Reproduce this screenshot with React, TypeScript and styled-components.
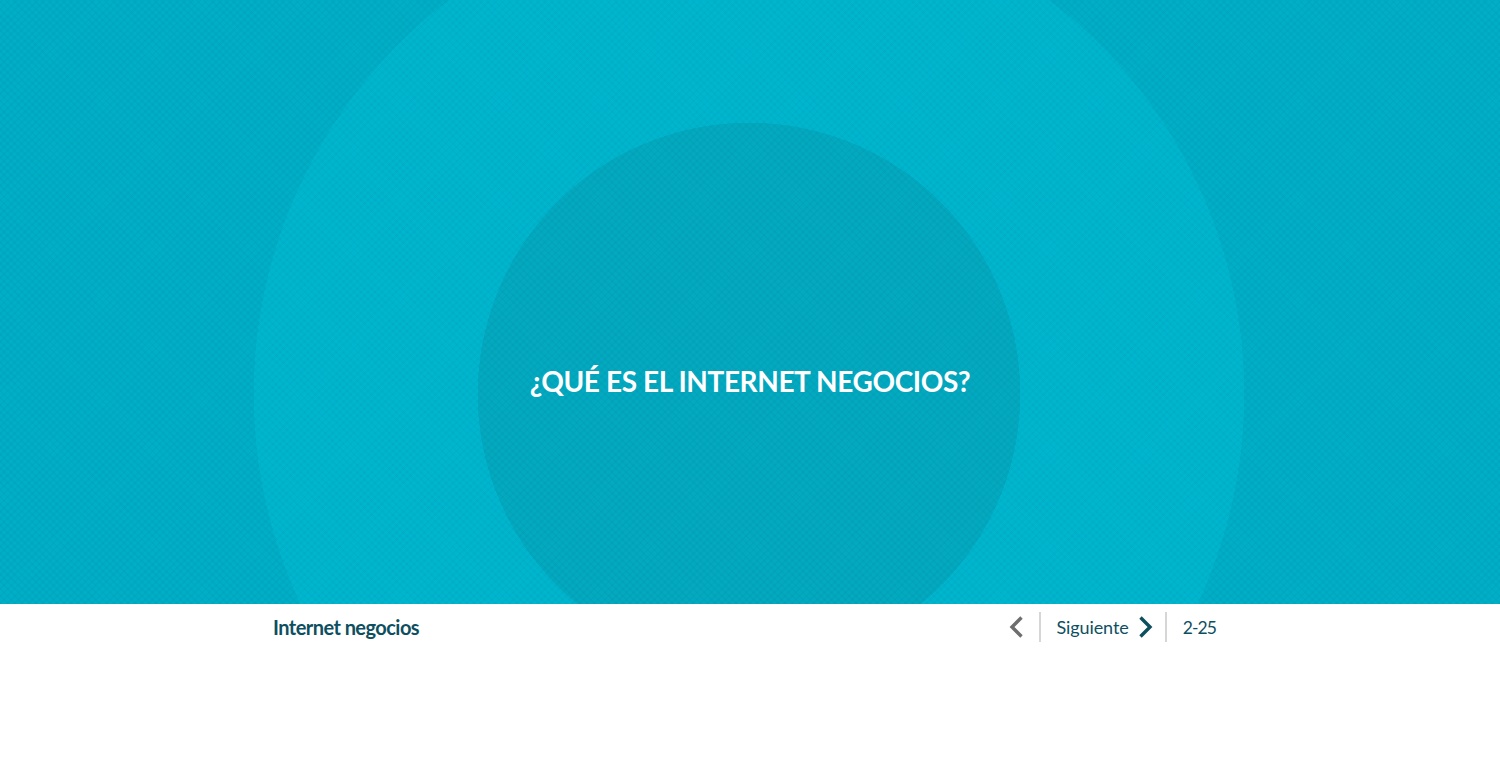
import React from "react";
import styled, { createGlobalStyle } from "styled-components";

const Global = createGlobalStyle`
  html, body { margin: 0; padding: 0; background: #ffffff; }
  body { font-family: "Lato", "Open Sans", sans-serif; }
`;

const Page = styled.div`
  width: 1500px;
  height: 768px;
  display: flex;
  flex-direction: column;
  background: #ffffff;
`;

const Banner = styled.section`
  height: 604px;
  flex: none;
  display: flex;
  justify-content: center;
  align-items: flex-start;
  padding-top: 359px;
  box-sizing: border-box;
  background-color: #00aec6;
  background-image:
    repeating-linear-gradient(45deg, rgba(0, 60, 80, 0.035) 0 2px, rgba(255,255,255,0) 2px 5px),
    repeating-linear-gradient(-45deg, rgba(0, 60, 80, 0.035) 0 2px, rgba(255,255,255,0) 2px 5px),
    radial-gradient(circle at 749px 394px, #02a9bf 0 271px, #00b6ce 271.5px 495px, #00aec6 495.5px);
`;

const Title = styled.h1`
  margin: 0;
  color: #ffffff;
  font-family: "Lato", sans-serif;
  font-weight: 700;
  font-size: 28px;
  letter-spacing: -0.4px;
  line-height: 44px;
`;

const Footer = styled.footer`
  flex: 1;
  background: #ffffff;
`;

const FooterRow = styled.div`
  width: 954px;
  margin: 0 auto;
  height: 46px;
  display: flex;
  align-items: center;
  justify-content: space-between;
`;

const CourseName = styled.span`
  color: #0e4f5f;
  font-family: "Lato", sans-serif;
  font-weight: 700;
  font-size: 20px;
  letter-spacing: -0.55px;
`;

const Nav = styled.nav`
  display: flex;
  align-items: center;
  height: 30px;
  padding-right: 11px;
`;

const NavButton = styled.button`
  border: none;
  background: none;
  padding: 0;
  display: flex;
  align-items: center;
  gap: 9px;
  cursor: pointer;
  font-family: "Lato", sans-serif;
  font-size: 18px;
  letter-spacing: -0.1px;
  color: #0e4f5f;
`;

const Divider = styled.span<{ $before: number; $after: number }>`
  width: 2px;
  height: 30px;
  background: #d6d6d6;
  margin: 0 ${(p) => p.$after}px 0 ${(p) => p.$before}px;
`;

const PageCount = styled.span`
  font-family: "Lato", sans-serif;
  font-size: 17.5px;
  letter-spacing: -0.9px;
  color: #0e4f5f;
`;

const Chevron = ({ dir, color }: { dir: "left" | "right"; color: string }) => (
  <svg width="15" height="24" viewBox="0 0 15 24" style={{ display: "block" }}>
    <path
      d={dir === "left" ? "M12.5 2.5 L3 12 L12.5 21.5" : "M2.5 2.5 L12 12 L2.5 21.5"}
      fill="none"
      stroke={color}
      strokeWidth="3.4"
      strokeLinecap="butt"
      strokeLinejoin="miter"
    />
  </svg>
);

export default function App() {
  return (
    <>
      <Global />
      <Page>
        <Banner>
          <Title>¿QUÉ ES EL INTERNET NEGOCIOS?</Title>
        </Banner>
        <Footer>
          <FooterRow>
            <CourseName>Internet negocios</CourseName>
            <Nav>
              <NavButton aria-label="Anterior">
                <Chevron dir="left" color="#6e6e6e" />
              </NavButton>
              <Divider $before={15} $after={15} />
              <NavButton>
                Siguiente
                <Chevron dir="right" color="#0e4f5f" />
              </NavButton>
              <Divider $before={12} $after={16} />
              <PageCount>2-25</PageCount>
            </Nav>
          </FooterRow>
        </Footer>
      </Page>
    </>
  );
}
